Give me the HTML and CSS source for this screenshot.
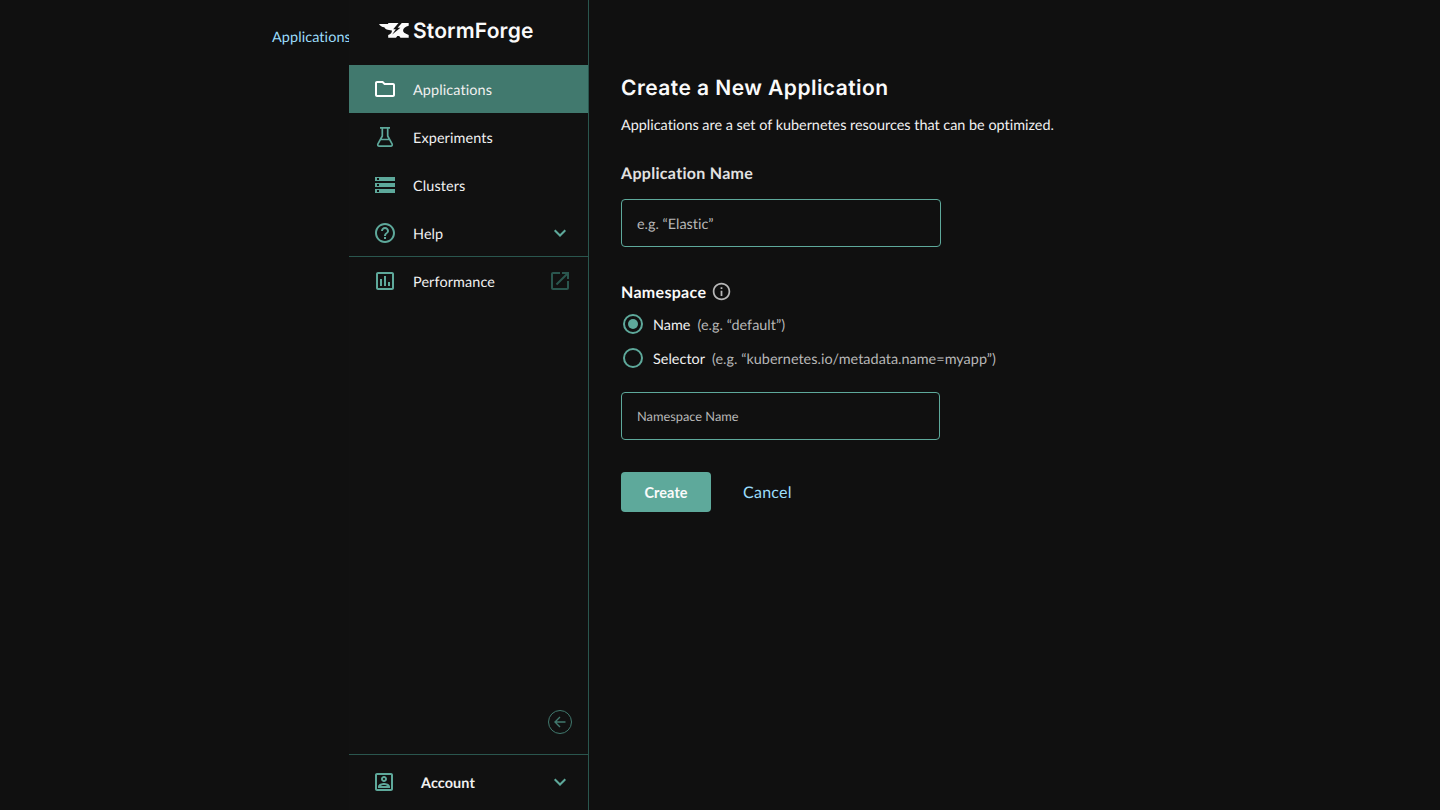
FILE: index.html
```html
<!DOCTYPE html>
<html lang="en">
<head>
<meta charset="utf-8">
<title>StormForge</title>
<link rel="stylesheet" href="styles.css">
</head>
<body>
<div class="app">
  <div class="crumbs"><a class="crumb">Applications</a></div>
  <aside class="sidebar">
    <div class="brand">
      <svg class="brand-mark" width="30" height="15" viewBox="0 0 30 15"><path fill="#fafafa" d="M0 .9h9.200V.1h10.300l-5.300 6.100h2.600l-3.600 5.400 8.200-6.900h-2.800L22.800.1h6.900v2.700c-3.200.8-5.200 2.300-5.600 4.300-.3 1.900 1.400 3.600 5.600 4.900v2.700h-8.200l-1.300-1.700h-1.900l-1.300 1.700H9.200V12c2.500-.9 3.900-2.500 3.700-4.600C8.500 7.300 5.900 6.200 5.300 4.300 3 3.900 1 2.600 0 .9z"/></svg>
      <span class="brand-name">StormForge</span>
    </div>
    <nav class="nav">
      <a class="item active">
        <svg class="icon" viewBox="0 0 24 24" fill="#fff"><path d="M9.170 6l2 2H20v10H4V6h5.170M10 4H4c-1.100 0-1.990.9-1.990 2L2 18c0 1.100.9 2 2 2h16c1.100 0 2-.9 2-2V8c0-1.100-.9-2-2-2h-8l-2-2z"/></svg>
        <span>Applications</span>
      </a>
      <a class="item">
        <svg class="icon" viewBox="0 0 24 24" fill="none" stroke="#5ea99b" stroke-width="1.700" stroke-linejoin="round"><path d="M7 2.850h10M9.300 3v8L4.950 18.900c-.6 1.200.1 2.150 1.300 2.150h11.500c1.200 0 1.900-.95 1.300-2.150L14.700 11V3M7.800 14.500h8.400"/></svg>
        <span>Experiments</span>
      </a>
      <a class="item">
        <svg class="icon" viewBox="0 0 24 24" fill="#5ea99b"><path d="M2 20h20v-4H2v4zm2-3h2v2H4v-2zM2 4v4h20V4H2zm4 3H4V5h2v2zm-4 7h20v-4H2v4zm2-3h2v2H4v-2z"/></svg>
        <span>Clusters</span>
      </a>
      <a class="item ruled">
        <svg class="icon" viewBox="0 0 24 24" fill="#5ea99b"><path d="M11 18h2v-2h-2v2zm1-16C6.480 2 2 6.480 2 12s4.480 10 10 10 10-4.480 10-10S17.520 2 12 2zm0 18c-4.410 0-8-3.590-8-8s3.590-8 8-8 8 3.590 8 8-3.590 8-8 8zm0-14c-2.210 0-4 1.790-4 4h2c0-1.100.9-2 2-2s2 .9 2 2c0 2-3 1.750-3 5h2c0-2.250 3-2.500 3-5 0-2.210-1.790-4-4-4z"/></svg>
        <span>Help</span>
        <svg class="icon end" viewBox="0 0 24 24" fill="none" stroke="#5ea99b" stroke-width="2"><path d="M6.700 9.300l5.300 5.200 5.300-5.200"/></svg>
      </a>
      <a class="item">
        <svg class="icon" viewBox="0 0 24 24" fill="#5ea99b"><path d="M19 3H5c-1.100 0-2 .9-2 2v14c0 1.100.9 2 2 2h14c1.100 0 2-.9 2-2V5c0-1.100-.9-2-2-2zm0 16H5V5h14v14zM7 10h2v7H7zM11 7h2v10h-2zM15 13h2v4h-2z"/></svg>
        <span>Performance</span>
        <svg class="icon end" viewBox="0 0 24 24" fill="#2a564e"><path d="M19 19H5V5h7V3H5c-1.110 0-2 .9-2 2v14c0 1.100.89 2 2 2h14c1.100 0 2-.9 2-2v-7h-2v7zM14 3v2h3.590l-9.830 9.830 1.410 1.410L19 6.410V10h2V3h-7z"/></svg>
      </a>
    </nav>
    <div class="collapse">
      <svg width="26" height="26" viewBox="0 0 26 26" fill="none" stroke="#41796e"><circle cx="13" cy="13" r="11.500"/><path stroke-width="1.400" d="M18.500 13H8.200M13 8l-5 5 5 5"/></svg>
    </div>
    <div class="account">
      <svg class="icon" viewBox="0 0 24 24" fill="#5ea99b"><path d="M19 3H5c-1.100 0-2 .9-2 2v14c0 1.100.9 2 2 2h14c1.100 0 2-.9 2-2V5c0-1.100-.9-2-2-2zm0 16H5V5h14v14zM12 12c1.650 0 3-1.350 3-3s-1.350-3-3-3-3 1.350-3 3 1.350 3 3 3zm0-4c.55 0 1 .45 1 1s-.45 1-1 1-1-.45-1-1 .45-1 1-1zM18 16.580c0-2.500-3.970-3.580-6-3.580s-6 1.080-6 3.580V18h12v-1.420zM8.480 16c.74-.51 2.230-1 3.520-1s2.780.49 3.520 1H8.480z"/></svg>
      <span>Account</span>
      <svg class="icon end" viewBox="0 0 24 24" fill="none" stroke="#5ea99b" stroke-width="2"><path d="M6.700 9.300l5.300 5.200 5.300-5.200"/></svg>
    </div>
  </aside>
  <main class="main">
    <h1 class="title">Create a New Application</h1>
    <p class="lead">Applications are a set of kubernetes resources that can be optimized.</p>
    <h2 class="label">Application Name</h2>
    <div class="field">e.g. “Elastic”</div>
    <h2 class="label namespace"><span>Namespace</span>
      <svg width="21" height="21" viewBox="0 0 24 24" fill="#b7b7b7"><path d="M11 7h2v2h-2zm0 4h2v6h-2zm1-9C6.480 2 2 6.480 2 12s4.480 10 10 10 10-4.480 10-10S17.520 2 12 2zm0 18c-4.410 0-8-3.590-8-8s3.590-8 8-8 8 3.590 8 8-3.590 8-8 8z"/></svg>
    </h2>
    <div class="radio">
      <svg class="icon" viewBox="0 0 24 24"><circle cx="12" cy="12" r="9" fill="none" stroke="#5ea99b" stroke-width="2"/><circle cx="12" cy="12" r="5" fill="#5ea99b"/></svg>
      <span>Name</span><span class="hint">(e.g. “default”)</span>
    </div>
    <div class="radio">
      <svg class="icon" viewBox="0 0 24 24"><circle cx="12" cy="12" r="9" fill="none" stroke="#5ea99b" stroke-width="2"/></svg>
      <span>Selector</span><span class="hint">(e.g. “kubernetes.io/metadata.name=myapp”)</span>
    </div>
    <div class="field small">Namespace Name</div>
    <div class="actions">
      <button class="create">Create</button>
      <a class="cancel">Cancel</a>
    </div>
  </main>
</div>
</body>
</html>
```
FILE: styles.css
```css
* { box-sizing: border-box; }
body { margin: 0; background: #101010; color: #f0f0f0; font: 14.400px/20px Lato, sans-serif; font-variant-ligatures: none; text-rendering: geometricPrecision; }
.app { display: flex; height: 810px; overflow: hidden; }
.crumbs { width: 349px; flex: none; overflow: hidden; padding: 28px 0 0 272px; }
.crumb { color: #9bdcfa; letter-spacing: .1px; }
.sidebar { width: 240px; flex: none; display: flex; flex-direction: column; border-right: 1px solid #2a564e; background: #111; }
.brand { height: 65px; display: flex; align-items: flex-start; padding: 23px 0 0 30px; gap: 4px; }
.brand-name { font: 600 21px/24px Inter, sans-serif; letter-spacing: .15px; color: #fafafa; margin-top: -3px; }
.item { height: 48px; display: flex; align-items: center; padding: 4px 16px 0 24px; letter-spacing: .12px; }
.item .icon { margin: -4px 16px 0 0; }
.active { background: #41796e; }
.ruled { border-bottom: 1px solid #2a564e; }
.icon { width: 24px; height: 24px; flex: none; }
.item .end, .account .end { margin-left: auto; margin-right: 0; }
.collapse { margin-top: auto; padding: 0 15px 19px 0; display: flex; justify-content: flex-end; }
.account { height: 56px; flex: none; border-top: 1px solid #2a564e; display: flex; align-items: center; padding: 0 16px 2px 23px; font-weight: 700; letter-spacing: .1px; }
.account span { margin: 4px 0 0 25px; }
.main { flex: 1; padding: 74px 0 0 32px; }
.title { font: 600 21px/30px Inter, sans-serif; letter-spacing: .45px; margin: 0; color: #fafafa; }
.lead { margin: 12px 0 0; }
.label { font: 700 16px/24px Lato, sans-serif; letter-spacing: .3px; margin: 26px 0 0; color: #e2e2e2; }
.field { width: 320px; height: 48px; margin-top: 13px; padding: 3px 15px 0; display: flex; align-items: center; border: 1px solid #5ea99b; border-radius: 4px; color: #b7b7b7; }
.namespace { height: 24px; margin-top: 33px; display: flex; align-items: center; gap: 5px; color: #fafafa; }
.namespace span { padding-top: 1px; }
.namespace svg { margin-top: -1px; }
.radio { display: flex; align-items: center; height: 24px; margin-top: 10px; }
.namespace + .radio { margin-top: 8px; }
.radio span { margin: 3px 0 0 8px; letter-spacing: .03px; }
.radio .hint { margin-left: 7px; color: #b7b7b7; }
.field.small { width: 319px; margin-top: 22px; padding-top: 0; font-size: 12.800px; }
.actions { display: flex; align-items: center; margin-top: 32px; gap: 32px; }
.create { width: 90px; height: 40px; border: 0; border-radius: 4px; padding: 2px 0 0; background: #5ea99b; color: #fafafa; font: 700 14.400px/20px Lato, sans-serif; letter-spacing: .1px; }
.cancel { font-size: 16px; letter-spacing: .25px; padding-top: 2px; color: #9bdcfa; }
```
